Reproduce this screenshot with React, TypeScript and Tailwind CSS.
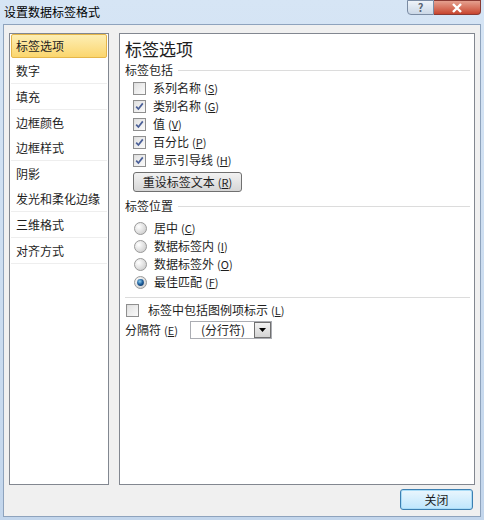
import React from "react";

const font = { fontFamily: '"Microsoft YaHei", "Noto Sans CJK SC", "Noto Sans", sans-serif' };

function Key({ k }: { k: string }) {
  return (
    <span className="ml-[3px] text-[11px]">
      (<span className="underline">{k}</span>)
    </span>
  );
}

function CheckBox({ checked }: { checked?: boolean }) {
  return (
    <span className="flex h-[13px] w-[13px] shrink-0 items-center justify-center border border-[#8f8f8f] bg-gradient-to-br from-[#dcdcdc] to-[#fbfbfb]">
      <span className="flex h-[9px] w-[9px] items-center justify-center bg-gradient-to-br from-[#e3e3e3] to-[#f8f8f8]">
        {checked && (
          <svg width="9" height="9" viewBox="0 0 9 9">
            <path d="M1.2 4.6 L3.4 7 L7.8 1.4" fill="none" stroke="#4a5f97" strokeWidth="1.7" />
          </svg>
        )}
      </span>
    </span>
  );
}

function Radio({ checked }: { checked?: boolean }) {
  return (
    <svg width="13" height="13" viewBox="0 0 13 13" className="shrink-0">
      <defs>
        <radialGradient id={checked ? "rg1" : "rg0"} cx="0.35" cy="0.35" r="0.7">
          <stop offset="0" stopColor="#ffffff" />
          <stop offset="1" stopColor="#cfcfcf" />
        </radialGradient>
        <radialGradient id="dot" cx="0.4" cy="0.35" r="0.7">
          <stop offset="0" stopColor="#8fd0f2" />
          <stop offset="0.6" stopColor="#1f5f9c" />
          <stop offset="1" stopColor="#0d3b6e" />
        </radialGradient>
      </defs>
      <circle cx="6.5" cy="6.5" r="6" fill={`url(#${checked ? "rg1" : "rg0"})`} stroke="#9a9a9a" />
      {checked && <circle cx="6.5" cy="6.5" r="3.4" fill="url(#dot)" />}
    </svg>
  );
}

function Group({ title }: { title: string }) {
  return (
    <div className="flex h-[18px] items-center gap-[5px]">
      <span>{title}</span>
      <span className="h-px flex-1 bg-[#dcdcdc]" />
    </div>
  );
}

const nav = [
  ["数字"],
  ["填充"],
  ["边框颜色", "边框样式"],
  ["阴影", "发光和柔化边缘"],
  ["三维格式"],
  ["对齐方式"],
];

export default function App() {
  return (
    <div className="flex h-[520px] w-[484px] flex-col bg-gradient-to-b from-[#d6e5f5] to-[#c3d6ec] text-[12px] text-[#1e1e1e]" style={font}>
      {/* title bar */}
      <div className="flex h-[24px] shrink-0 items-start">
        <span className="pl-[4px] pt-[3px] text-[12px] text-black">设置数据标签格式</span>
        <div className="ml-auto mr-[3px] flex">
          <div className="flex h-[15px] w-[27px] items-center justify-center rounded-bl-[4px] border border-[#7a8ba3] bg-gradient-to-b from-[#eef3f9] to-[#cbd8e7] text-[11px] font-bold text-[#5b6573]">
            ?
          </div>
          <div className="flex h-[15px] w-[47px] items-center justify-center rounded-br-[4px] border border-l-0 border-[#8a3a33] bg-gradient-to-b from-[#e5a08f] to-[#c7442e]">
            <svg width="12" height="10" viewBox="0 0 12 10">
              <path d="M2 1 L10 9 M10 1 L2 9" stroke="#fff" strokeWidth="2.4" />
            </svg>
          </div>
        </div>
      </div>

      {/* client area */}
      <div className="mx-[3px] mb-[3px] flex flex-1 flex-col border border-[#8ea3bd] bg-[#f0f0f0]">
        <div className="flex gap-[10px] px-[5px] pt-[8px]">
          {/* left list */}
          <div className="h-[452px] w-[100px] border border-[#828790] bg-white px-px">
            <div className="flex h-[24px] items-center rounded-[2px] border border-[#e5b64a] bg-gradient-to-b from-[#fdeeb3] to-[#fbd66d] pl-[4px]">
              标签选项
            </div>
            {nav.map((g, i) => (
              <div key={i} className="border-b border-[#eeeeee]">
                {g.map((t) => (
                  <div key={t} className="flex h-[25px] items-center pl-[5px]">
                    {t}
                  </div>
                ))}
              </div>
            ))}
          </div>

          {/* right panel */}
          <div className="h-[452px] flex-1 border border-[#828790] bg-white pl-[5px] pr-[4px]">
            <div className="mt-[3px] h-[24px] text-[17px] leading-[24px]">标签选项</div>
            <Group title="标签包括" />
            <div className="flex flex-col pl-[8px]">
              {[
                ["系列名称", "S", false],
                ["类别名称", "G", true],
                ["值", "V", true],
                ["百分比", "P", true],
                ["显示引导线", "H", true],
              ].map(([t, k, c]) => (
                <div key={t as string} className="flex h-[18px] items-center gap-[7px]">
                  <CheckBox checked={c as boolean} />
                  <span>
                    {t}
                    <Key k={k as string} />
                  </span>
                </div>
              ))}
              <div className="mt-[3px] flex h-[20px] w-[109px] items-center justify-center rounded-[3px] border border-[#707070] bg-gradient-to-b from-[#f2f2f2] to-[#d6d6d6]">
                重设标签文本<Key k="R" />
              </div>
            </div>
            <div className="mt-[5px]">
              <Group title="标签位置" />
            </div>
            <div className="mt-[4px] flex flex-col pl-[9px]">
              {[
                ["居中", "C", false],
                ["数据标签内", "I", false],
                ["数据标签外", "O", false],
                ["最佳匹配", "F", true],
              ].map(([t, k, c]) => (
                <div key={t as string} className="flex h-[18px] items-center gap-[7px]">
                  <Radio checked={c as boolean} />
                  <span>
                    {t}
                    <Key k={k as string} />
                  </span>
                </div>
              ))}
            </div>
            <div className="mt-[6px] h-px bg-[#dcdcdc]" />
            <div className="mt-[3px] flex h-[18px] items-center gap-[9px] pl-[1px]">
              <CheckBox />
              <span>
                标签中包括图例项标示<Key k="L" />
              </span>
            </div>
            <div className="mt-px flex h-[20px] items-center">
              <span className="w-[65px]">
                分隔符<Key k="E" />
              </span>
              <div className="flex h-[18px] w-[82px] items-center border border-[#abadb3] bg-white">
                <span className="flex-1 pl-[10px]">(分行符)</span>
                <div className="flex h-[16px] w-[17px] items-center justify-center border border-[#707070] bg-gradient-to-b from-[#f2f2f2] to-[#d4d4d4]">
                  <svg width="7" height="4" viewBox="0 0 7 4">
                    <path d="M0 0 H7 L3.5 4 Z" fill="#000" />
                  </svg>
                </div>
              </div>
            </div>
          </div>
        </div>
        <div className="flex justify-end px-[7px] pt-[4px]">
          <div className="flex h-[21px] w-[73px] items-center justify-center rounded-[3px] border border-[#3c7fb1] bg-gradient-to-b from-[#eaf6fd] to-[#bee6fd] shadow-[inset_0_0_0_1px_#a9dcf7]">
            关闭
          </div>
        </div>
      </div>
    </div>
  );
}
